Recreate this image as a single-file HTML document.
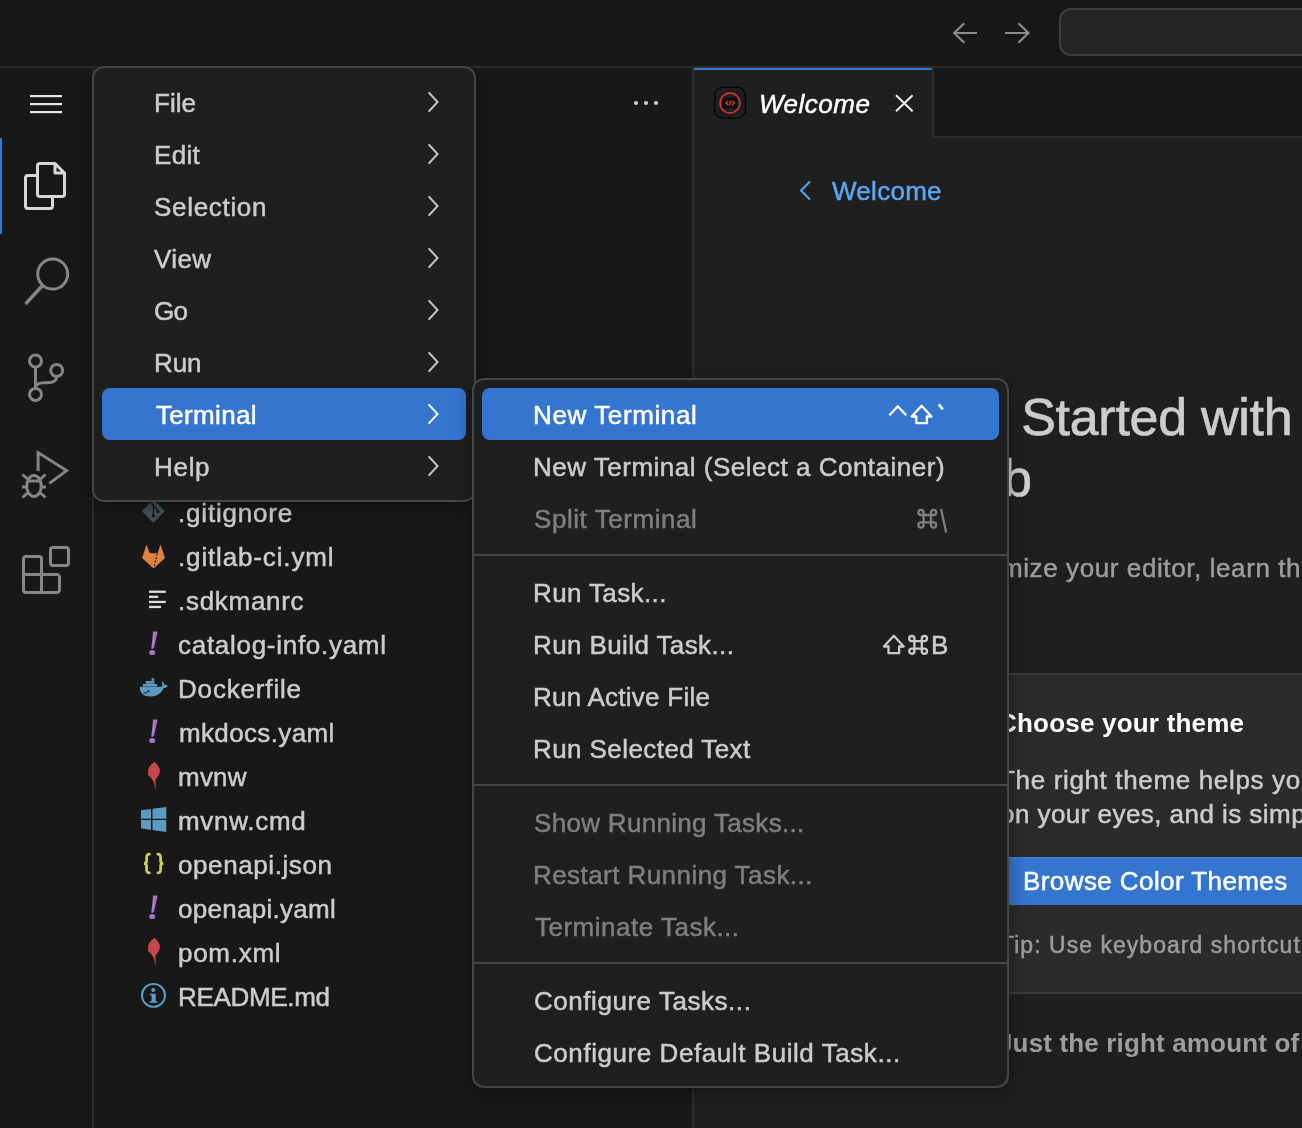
<!DOCTYPE html>
<html>
<head>
<meta charset="utf-8">
<title>Welcome</title>
<style>
*{box-sizing:border-box;margin:0;padding:0}
html,body{width:1302px;height:1128px;overflow:hidden;background:#181818}
body{font-family:"Liberation Sans",sans-serif;color:#cccccc;position:relative;font-size:26px}
.abs{position:absolute}
.t{position:absolute;white-space:nowrap;line-height:1;will-change:transform;-webkit-text-stroke:0.5px currentColor}
svg{position:absolute;left:0;top:0;overflow:visible}
#titlebar{left:0;top:0;width:1302px;height:68px;background:#181818;border-bottom:2px solid #2b2b2b}
#cmd{left:1059px;top:8px;width:260px;height:48px;background:#252525;border:2px solid #404040;border-radius:12px}
#activity{left:0;top:68px;width:94px;height:1060px;background:#181818;border-right:2px solid #2b2b2b}
#activeind{left:0;top:138px;width:2px;height:96px;background:#3478d6}
#sidebar{left:94px;top:68px;width:600px;height:1060px;background:#181818;border-right:2px solid #2b2b2b}
#tabs{left:694px;top:68px;width:608px;height:70px;background:#181818;border-bottom:2px solid #2b2b2b}
#tab{left:694px;top:68px;width:238px;height:70px;background:#1f1f1f;border-top:2px solid #3478d6}
#tabr{left:932px;top:68px;width:2px;height:70px;background:#2b2b2b}
#editor{left:694px;top:138px;width:608px;height:990px;background:#1f1f1f}
#card{left:990px;top:673px;width:330px;height:321px;background:#2b2b2b;border-top:2px solid #3c3c3c;border-bottom:2px solid #3c3c3c}
#btn{left:990px;top:857px;width:330px;height:48px;background:#3475d0;border-top:1px solid #4184dc}
.menu{background:#1f1f1f;border:2px solid #454545;border-radius:12px;box-shadow:0 4px 16px rgba(0,0,0,.36)}
#menu1{left:92px;top:66px;width:384px;height:436px}
#menu2{left:472px;top:378px;width:537px;height:710px}
.sel{background:#3475d0;border-radius:8px;height:52px}
.sep{height:2px;background:#454545;left:474px;width:533px}
</style>
</head>
<body>
<div id="titlebar" class="abs"></div>
<div id="cmd" class="abs"></div>
<div id="activity" class="abs"></div>
<div id="activeind" class="abs"></div>
<div id="sidebar" class="abs"></div>
<div id="tabs" class="abs"></div>
<div id="tab" class="abs"></div><div id="tabr" class="abs"></div>
<div id="editor" class="abs"></div>
<div id="card" class="abs"></div>
<div id="btn" class="abs"></div>
<div class="t" style="left:177.95px;top:499.59px;font-size:26px;letter-spacing:0.811px;color:#cccccc;">.gitignore</div>
<div class="t" style="left:177.95px;top:543.59px;font-size:26px;letter-spacing:0.854px;color:#cccccc;">.gitlab-ci.yml</div>
<div class="t" style="left:177.95px;top:587.59px;font-size:26px;letter-spacing:0.710px;color:#cccccc;">.sdkmanrc</div>
<div class="t" style="left:178.25px;top:631.59px;font-size:26px;letter-spacing:0.715px;color:#cccccc;">catalog-info.yaml</div>
<div class="t" style="left:177.85px;top:675.59px;font-size:26px;letter-spacing:0.830px;color:#cccccc;">Dockerfile</div>
<div class="t" style="left:178.75px;top:719.59px;font-size:26px;letter-spacing:0.358px;color:#cccccc;">mkdocs.yaml</div>
<div class="t" style="left:178.25px;top:763.59px;font-size:26px;letter-spacing:0.227px;color:#cccccc;">mvnw</div>
<div class="t" style="left:178.25px;top:807.59px;font-size:26px;letter-spacing:0.708px;color:#cccccc;">mvnw.cmd</div>
<div class="t" style="left:178.25px;top:851.59px;font-size:26px;letter-spacing:0.591px;color:#cccccc;">openapi.json</div>
<div class="t" style="left:178.25px;top:895.59px;font-size:26px;letter-spacing:0.275px;color:#cccccc;">openapi.yaml</div>
<div class="t" style="left:178.25px;top:939.59px;font-size:26px;letter-spacing:0.723px;color:#cccccc;">pom.xml</div>
<div class="t" style="left:177.85px;top:983.59px;font-size:26px;letter-spacing:-0.315px;color:#cccccc;">README.md</div>
<div class="t" style="left:758.75px;top:90.99px;font-size:26px;letter-spacing:0.496px;color:#ffffff;font-style:italic;">Welcome</div>
<div class="t" style="left:831.65px;top:177.99px;font-size:26px;letter-spacing:0.279px;color:#5aa6f5;">Welcome</div>
<div class="t" style="left:923.90px;top:390.68px;font-size:52px;letter-spacing:-0.278px;color:#cccccc;-webkit-text-stroke:0.7px currentColor;">Get Started with</div>
<div class="t" style="left:925.59px;top:452.18px;font-size:52px;letter-spacing:0.000px;color:#cccccc;-webkit-text-stroke:0.7px currentColor;">Web</div>
<div class="t" style="left:929.62px;top:554.99px;font-size:26px;letter-spacing:0.599px;color:#9d9d9d;">Customize your editor, learn th</div>
<div class="t" style="left:998.22px;top:709.89px;font-size:26px;letter-spacing:0.208px;color:#ffffff;font-weight:700;-webkit-text-stroke:0;">Choose your theme</div>
<div class="t" style="left:999.01px;top:767.19px;font-size:26px;letter-spacing:0.653px;color:#cccccc;">The right theme helps yo</div>
<div class="t" style="left:1000.34px;top:801.19px;font-size:26px;letter-spacing:0.449px;color:#cccccc;">on your eyes, and is simp</div>
<div class="t" style="left:1000.17px;top:933.73px;font-size:23px;letter-spacing:1.034px;color:#9d9d9d;">Tip: Use keyboard shortcut</div>
<div class="t" style="left:998.09px;top:1030.19px;font-size:26px;letter-spacing:0.154px;color:#9d9d9d;font-weight:700;-webkit-text-stroke:0;">Just the right amount of</div>
<div class="t" style="left:1023.05px;top:867.89px;font-size:26px;letter-spacing:0.417px;color:#ffffff;">Browse Color Themes</div>
<svg width="1302" height="1128" viewBox="0 0 1302 1128" fill="none">
<!-- title arrows -->
<g stroke="#8b8b8b" stroke-width="2.2" stroke-linejoin="miter">
<path d="M954,33 H977 M964.3,23.2 L954.2,33 L964.3,42.8"/>
<path d="M1005,33 H1028.5 M1018.4,23.2 L1028.5,33 L1018.4,42.8"/>
</g>
<!-- hamburger -->
<g fill="#e7e7e7"><rect x="30" y="95" width="32" height="2.2"/><rect x="30" y="103" width="32" height="2.2"/><rect x="30" y="111" width="32" height="2.2"/></g>
<!-- files -->
<g stroke="#d7d7d7" stroke-width="3" stroke-linejoin="round">
<path d="M36,175.5 H28 a2.5,2.5 0 0 0 -2.5,2.5 V206 a2.5,2.5 0 0 0 2.5,2.5 H50 a2.5,2.5 0 0 0 2.5,-2.5 V198"/>
<path d="M40,163.5 H55 L64.5,173 V194 a2.5,2.5 0 0 1 -2.5,2.5 H40 a2.5,2.5 0 0 1 -2.5,-2.5 V166 a2.5,2.5 0 0 1 2.5,-2.5 Z M55,163.5 V173 H64.5"/>
</g>
<!-- search -->
<g stroke="#868686" stroke-width="3">
<circle cx="52.7" cy="274.1" r="15"/><path d="M42,286 L25.5,304" stroke-width="3.4"/>
</g>
<!-- source control -->
<g stroke="#868686" stroke-width="3">
<circle cx="35.5" cy="361" r="6"/><circle cx="56.7" cy="370.4" r="6"/><circle cx="35.5" cy="394.4" r="6"/>
<path d="M35.5,367 V388.4 M56.7,376.4 C56.7,381 52.5,382.7 47.5,382.7 H44 C39,382.7 35.5,384.5 35.5,388.4"/>
</g>
<!-- debug -->
<g stroke="#868686" stroke-width="3">
<path d="M38.1,471 V452.6 L66.6,470.6 L49.3,483.4" stroke-linejoin="miter"/>
<ellipse cx="34" cy="486" rx="7.3" ry="10.4"/>
<path d="M27,481 H41 M22,487 H26.5 M41.5,487 H46 M22.5,474.5 L27.5,479 M45.5,474.5 L40.5,479 M22.5,497.5 L27.5,493 M45.5,497.5 L40.5,493"/>
</g>
<!-- extensions -->
<g stroke="#868686" stroke-width="3">
<path d="M23.5,590 V559 a2.5,2.5 0 0 1 2.5,-2.5 H39 a2.5,2.5 0 0 1 2.5,2.5 V574.5 H57 a2.5,2.5 0 0 1 2.5,2.5 V590 a2.5,2.5 0 0 1 -2.5,2.5 H26 a2.5,2.5 0 0 1 -2.5,-2.5 Z M23.5,574.5 H41.5 V592.5"/>
<rect x="50.5" y="547.5" width="18" height="18" rx="2.5"/>
</g>
<!-- ellipsis -->
<g fill="#d0d0d0"><circle cx="636" cy="103" r="2.1"/><circle cx="646" cy="103" r="2.1"/><circle cx="656" cy="103" r="2.1"/></g>
<!-- tab icon -->
<rect x="714.6" y="87.3" width="30.8" height="30.8" rx="8" fill="#1e1e1e" stroke="#060606" stroke-width="1.4"/>
<circle cx="730" cy="103" r="9.9" stroke="#e0342c" stroke-width="1.5"/>
<rect x="723.6" y="98.6" width="12.9" height="8.8" fill="#141414" stroke="#050505" stroke-width="1.1"/>
<path d="M728.3,100.9 L726,103 L728.3,105.1 M731,100.6 L729.4,105.4 M732.2,100.9 L734.5,103 L732.2,105.1" stroke="#e0342c" stroke-width="1.3"/>
<!-- close X -->
<path d="M896,95.3 L912.6,111.3 M912.6,95.3 L896,111.3" stroke="#f0f0f0" stroke-width="2"/>
<!-- link chevron -->
<path d="M810,181.5 L801,190.5 L810,199.5" stroke="#5aa6f5" stroke-width="2"/>
<!-- git -->
<path d="M153.4,499.6 L164.6,510.8 a0.6,0.6 0 0 1 0,0.8 L153.8,522.4 a0.6,0.6 0 0 1 -0.8,0 L142.2,511.6 a0.6,0.6 0 0 1 0,-0.8 Z" fill="#41535b"/>
<path d="M153.4,504 V515 M150.5,501.5 L157.6,510.8" stroke="#181818" stroke-width="1.3"/>
<circle cx="153.4" cy="516" r="1.7" fill="#181818"/><circle cx="158" cy="511.5" r="1.7" fill="#181818"/>
<!-- gitlab -->
<path d="M146.5,544.5 L149.7,553.2 H157.5 L160.5,544.5 L165,558 L153.6,568.5 L142,558 Z" fill="#dd8240"/>
<path d="M157.3,553.5 L153.9,567.5" stroke="#181818" stroke-width="1" stroke-dasharray="2.2 1.4"/>
<!-- lines -->
<g fill="#dcdcdc"><rect x="149" y="590.6" width="16.7" height="2.3"/><rect x="149" y="595.7" width="9.2" height="2.3"/><rect x="149" y="600.8" width="16.7" height="2.3"/><rect x="149" y="605.8" width="12" height="2.3"/></g>
<!-- yaml ! x3 -->
<g fill="#a476c6">
<g id="bang"><path d="M153.1,631.5 H157.6 L153.9,648.4 H151.3 Z"/><ellipse cx="152.2" cy="652.5" rx="3" ry="2.6"/></g>
<use href="#bang" y="88"/><use href="#bang" y="264"/>
</g>
<!-- docker -->
<g fill="#5a9bc1">
<path d="M139.9,686.8 H161.8 C162.6,684.5 162.3,683 161.5,681.6 C163.6,682.2 164.6,683.8 164.8,685.2 C166,684.9 167.3,685.2 167.8,685.8 C167,687.6 165,688.2 163.4,688.2 C161.2,693.8 156.5,696.6 149.8,696.6 C143,696.6 139.6,692.5 139.9,686.8 Z"/>
<rect x="142.9" y="684" width="14.2" height="2.5"/><rect x="145.8" y="681" width="8.6" height="2.7"/><rect x="151.6" y="678.2" width="2.7" height="2.6"/>
</g>
<path d="M143.5,693 C145.5,693.3 147,692.6 148,691.6" stroke="#181818" stroke-width="1"/>
<circle cx="148.6" cy="691" r="0.9" fill="#181818"/>
<!-- feather x2 -->
<g fill="#c4484b">
<path id="fe" d="M154.3,762 C156,763 157.6,764.6 158.3,766 C159.3,767.6 159.9,769.2 159.9,770.7 C159.9,772.2 159.6,773.6 159.1,774.7 C158.6,775.8 157.9,776.8 157.1,777.5 L155.5,779.5 C155.4,780.3 155.4,781.1 155.4,781.9 C155.5,784 155.8,786.2 155.9,788.3 L155.1,788.3 C154.8,786.4 154.4,784.5 153.9,782.7 C153.4,781.4 152.7,780.2 151.9,779.1 L149.5,776.3 L147.4,774.3 L148.2,773.1 C148,771.8 148,770.5 148.3,769.2 C148.7,767.7 149.6,766.3 150.7,765.2 C151.8,764 153,762.9 154.3,762 Z"/>
<use href="#fe" y="176"/>
</g>
<!-- windows -->
<g fill="#5a9bc1">
<path d="M141,810.3 L151,808.9 V818.7 H141 Z M152.5,808.7 L166.3,807 V818.7 H152.5 Z M141,820 H151 V829.9 L141,828.3 Z M152.5,820 H166.3 V832 L152.5,830.1 Z"/>
</g>
<!-- json braces -->
<g stroke="#d0cd4c" stroke-width="2.8" stroke-linecap="round">
<path d="M149.3,854.2 C146.6,854.2 146.6,855.8 146.6,857.6 V860.4 C146.6,862.4 145.6,863.4 143.9,863.4 C145.6,863.4 146.6,864.4 146.6,866.4 V869.4 C146.6,871.2 146.6,872.8 149.3,872.8"/>
<path d="M157.9,854.2 C160.6,854.2 160.6,855.8 160.6,857.6 V860.4 C160.6,862.4 161.6,863.4 163.3,863.4 C161.6,863.4 160.6,864.4 160.6,866.4 V869.4 C160.6,871.2 160.6,872.8 157.9,872.8"/>
</g>
<!-- info -->
<circle cx="153.5" cy="995.4" r="11.5" stroke="#5b9fc8" stroke-width="1.9"/>
<circle cx="153.2" cy="990" r="2" fill="#5b9fc8"/>
<path d="M150,993.8 H155.7 V1001.3 H157.2 V1002.7 H149.6 V1001.3 H151.6 V995.3 H150 Z" fill="#5b9fc8"/>
</svg>

<div id="menu1" class="abs menu"></div>
<div class="abs sel" style="left:102px;top:388px;width:364px"></div>
<div id="menu2" class="abs menu"></div>
<div class="abs sel" style="left:482px;top:388px;width:517px"></div>
<div class="abs sep" style="top:554px"></div>
<div class="abs sep" style="top:784px"></div>
<div class="abs sep" style="top:962px"></div>
<div class="t" style="left:153.55px;top:89.99px;font-size:26px;letter-spacing:0.022px;color:#cccccc;">File</div>
<div class="t" style="left:153.55px;top:141.99px;font-size:26px;letter-spacing:0.307px;color:#cccccc;">Edit</div>
<div class="t" style="left:154.25px;top:193.99px;font-size:26px;letter-spacing:0.688px;color:#cccccc;">Selection</div>
<div class="t" style="left:154.45px;top:245.99px;font-size:26px;letter-spacing:0.397px;color:#cccccc;">View</div>
<div class="t" style="left:154.25px;top:297.99px;font-size:26px;letter-spacing:-0.724px;color:#cccccc;">Go</div>
<div class="t" style="left:153.55px;top:349.99px;font-size:26px;letter-spacing:-0.068px;color:#cccccc;">Run</div>
<div class="t" style="left:155.55px;top:401.99px;font-size:26px;letter-spacing:0.332px;color:#ffffff;">Terminal</div>
<div class="t" style="left:153.85px;top:453.99px;font-size:26px;letter-spacing:0.696px;color:#cccccc;">Help</div>
<div class="t" style="left:533.45px;top:401.99px;font-size:26px;letter-spacing:0.617px;color:#ffffff;">New Terminal</div>
<div class="t" style="left:533.45px;top:453.99px;font-size:26px;letter-spacing:0.504px;color:#cccccc;">New Terminal (Select a Container)</div>
<div class="t" style="left:534.45px;top:505.99px;font-size:26px;letter-spacing:0.556px;color:#7f7f7f;">Split Terminal</div>
<div class="t" style="left:533.45px;top:579.99px;font-size:26px;letter-spacing:0.377px;color:#cccccc;">Run Task...</div>
<div class="t" style="left:533.45px;top:631.99px;font-size:26px;letter-spacing:0.396px;color:#cccccc;">Run Build Task...</div>
<div class="t" style="left:533.45px;top:683.99px;font-size:26px;letter-spacing:0.251px;color:#cccccc;">Run Active File</div>
<div class="t" style="left:533.45px;top:735.99px;font-size:26px;letter-spacing:0.420px;color:#cccccc;">Run Selected Text</div>
<div class="t" style="left:534.45px;top:809.99px;font-size:26px;letter-spacing:0.313px;color:#7f7f7f;">Show Running Tasks...</div>
<div class="t" style="left:533.45px;top:861.99px;font-size:26px;letter-spacing:0.436px;color:#7f7f7f;">Restart Running Task...</div>
<div class="t" style="left:535.45px;top:913.99px;font-size:26px;letter-spacing:0.501px;color:#7f7f7f;">Terminate Task...</div>
<div class="t" style="left:534.45px;top:987.99px;font-size:26px;letter-spacing:0.543px;color:#cccccc;">Configure Tasks...</div>
<div class="t" style="left:534.45px;top:1039.99px;font-size:26px;letter-spacing:0.566px;color:#cccccc;">Configure Default Build Task...</div>
<div class="t" style="left:930.55px;top:631.99px;font-size:26px;letter-spacing:0.000px;color:#cccccc;">B</div>
<svg width="1302" height="1128" viewBox="0 0 1302 1128" fill="none">
<defs>
<path id="chev" d="M428.6,92.4 L437.6,102 L428.6,111.6"/>
<path id="shift" d="M11.1,1.2 L21,11.9 H16.4 V18.6 H5.8 V11.9 H1.2 Z"/>
<path id="cmdk" d="M6.3,13.7 V3.7 A2.6,2.6 0 1 0 3.7,6.3 H16.3 A2.6,2.6 0 1 0 13.7,3.7 V16.3 A2.6,2.6 0 1 0 16.3,13.7 H3.7 A2.6,2.6 0 1 0 6.3,16.3 Z"/>
</defs>
<g stroke="#cccccc" stroke-width="1.9">
<use href="#chev"/><use href="#chev" y="52"/><use href="#chev" y="104"/><use href="#chev" y="156"/><use href="#chev" y="208"/><use href="#chev" y="260"/>
<use href="#chev" y="312" stroke="#ffffff"/><use href="#chev" y="364"/>
</g>
<!-- ^ shift ` -->
<g stroke="#ffffff" stroke-width="2.3" stroke-linejoin="round">
<path d="M889.4,415.2 L897.8,406.2 L906.2,415.2"/>
<use href="#shift" x="910.5" y="404.6"/>
<path d="M938.8,404.4 L942.8,409.4" stroke-width="2.8"/>
</g>
<!-- cmd \ -->
<g stroke="#7f7f7f" stroke-width="2.3">
<use href="#cmdk" x="917.3" y="508.7"/>
<path d="M941,509 L946.2,532.6"/>
</g>
<!-- shift cmd B -->
<g stroke="#cccccc" stroke-width="2.3" stroke-linejoin="round">
<use href="#shift" x="882.7" y="634.6"/>
<use href="#cmdk" x="908.1" y="634.9"/>
</g>
</svg>

</body>
</html>
